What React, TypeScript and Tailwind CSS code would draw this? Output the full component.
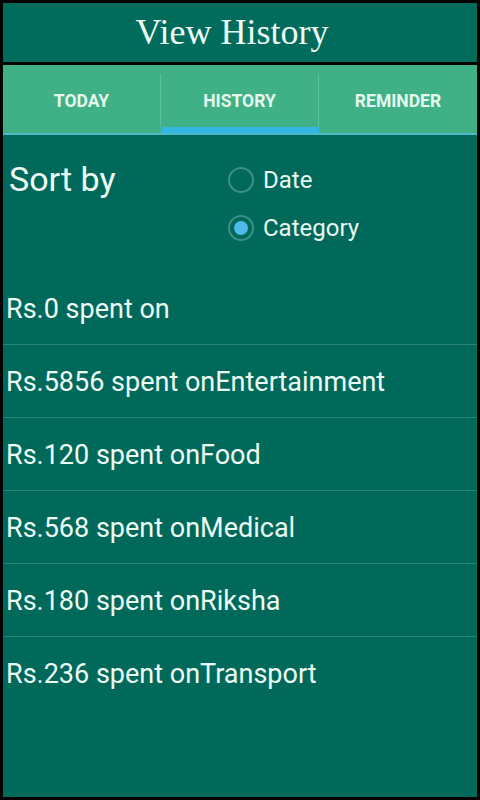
import React from "react";

const rows = [
  "Rs.0 spent on",
  "Rs.5856 spent onEntertainment",
  "Rs.120 spent onFood",
  "Rs.568 spent onMedical",
  "Rs.180 spent onRiksha",
  "Rs.236 spent onTransport",
];

function Radio({ checked, label }: { checked?: boolean; label: string }) {
  return (
    <div className="flex items-center h-[48px]">
      <div className="w-[26px] h-[26px] rounded-full border-2 border-[#3d8f82] flex items-center justify-center">
        {checked && <div className="w-[14px] h-[14px] rounded-full bg-[#4fb8ec]" />}
      </div>
      <span className="ml-[9px] text-[24px] text-[#eaf8f2]">{label}</span>
    </div>
  );
}

export default function App() {
  return (
    <div className="w-[480px] h-[800px] bg-black p-[3px] flex flex-col" style={{ fontFamily: "Roboto, 'Noto Sans', sans-serif" }}>
      <div className="h-[59px] bg-[#016b5c] flex items-center justify-center shrink-0">
        <h1
          className="text-[36px] text-[#eefcf6] mr-[16px] mt-[-1px]"
          style={{ fontFamily: "'Liberation Serif', serif" }}
        >
          View History
        </h1>
      </div>
      <div className="h-[3px] shrink-0" />
      <div className="h-[70px] bg-[#40b187] flex flex-col shrink-0">
        <div className="flex flex-1">
          {["TODAY", "HISTORY", "REMINDER"].map((t, i) => (
            <div key={t} className="flex-1 flex flex-col">
              <div className="flex-1 flex items-stretch">
                <div className="flex-1 flex items-center justify-center pt-[11px] text-[17.5px] font-bold text-[#e6f7ef]">{t}</div>
                {i < 2 && <div className="w-px bg-[#5cc09a] mt-[9px]" />}
              </div>
              <div className={`h-[6px] ${i === 1 ? "bg-[#33b5e5]" : ""}`} />
            </div>
          ))}
        </div>
        <div className="h-[2px] bg-[#4cb9c9]" />
      </div>
      <div className="flex-1 bg-[#01695a] flex flex-col">
        <div className="flex pt-[14px] h-[137px]">
          <div className="w-[222px] pl-[6px] text-[34px] text-[#eefcf6] leading-[60px]">Sort by</div>
          <div className="flex flex-col pt-[7px] ml-[3px]">
            <Radio label="Date" />
            <Radio checked label="Category" />
          </div>
        </div>
        {rows.map((r, i) => (
          <div
            key={r}
            className={`h-[73px] flex items-center pl-[3px] pt-[2px] text-[27px] text-[#eefcf6] ${i < rows.length - 1 ? "border-b border-[#2a8576]" : ""}`}
          >
            {r}
          </div>
        ))}
      </div>
    </div>
  );
}
